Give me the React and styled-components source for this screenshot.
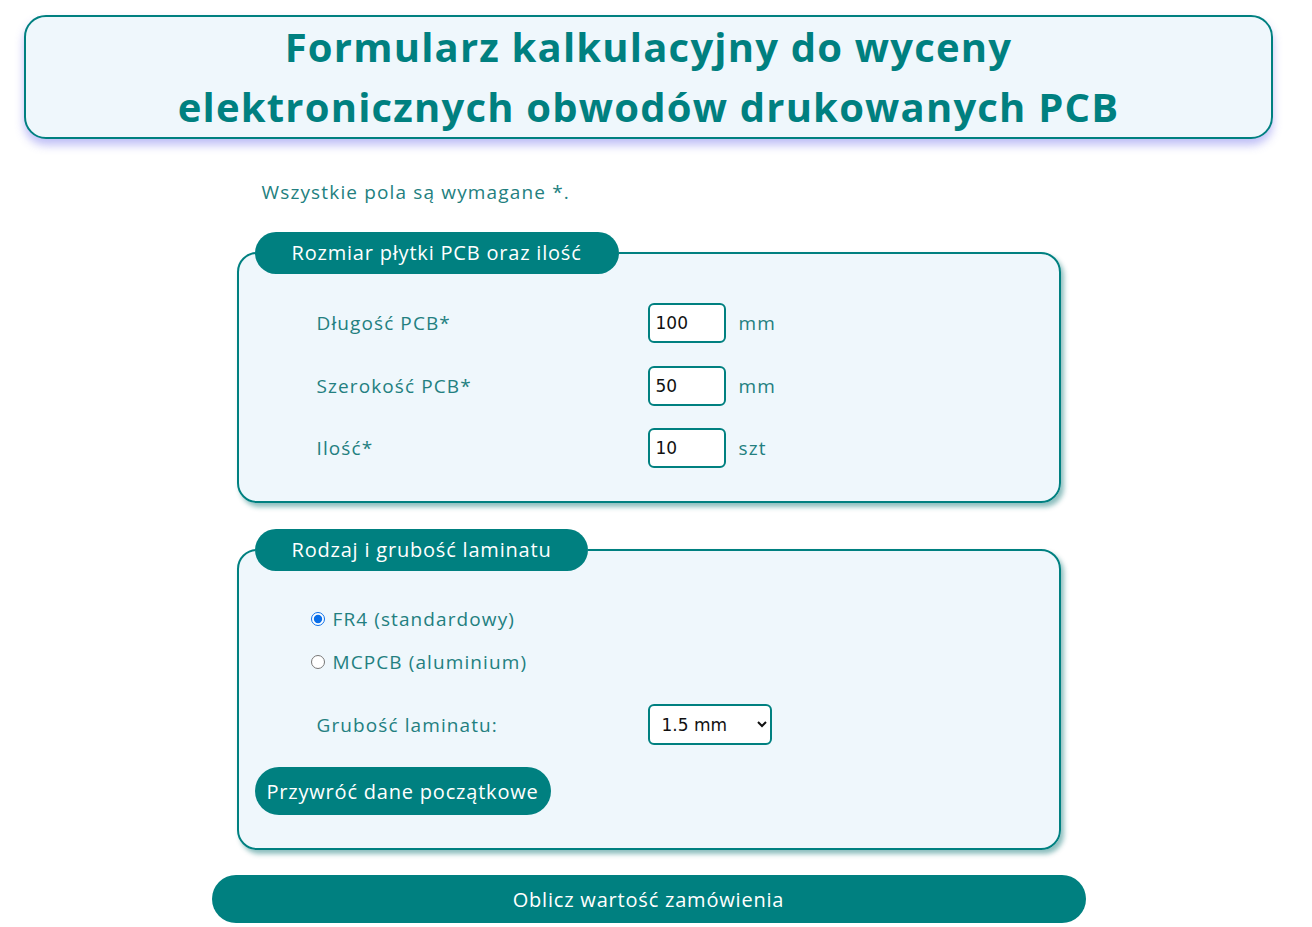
import React, { useState } from 'react';
import styled, { createGlobalStyle } from 'styled-components';

const GlobalStyle = createGlobalStyle`
    body {
        margin: 0;
        background: #fff;
        font-family: "Open Sans", "Noto Sans", sans-serif;
        color: #237f80;
    }
    * { box-sizing: border-box; }
`;

const teal = '#008080';

const Page = styled.div`
    width: 1297px;
    padding: 15px 24px 0;
`;

const Header = styled.header`
    height: 124px;
    border: 2px solid ${teal};
    border-radius: 22px;
    background: #eff7fc;
    box-shadow: 0 6px 10px rgba(110, 110, 235, 0.45);
    display: flex;
    align-items: center;
    justify-content: center;
`;

const Title = styled.h1`
    margin: 0;
    font-size: 40px;
    line-height: 60px;
    font-weight: 700;
    letter-spacing: 1.2px;
    color: ${teal};
    text-align: center;
`;

const Form = styled.form`
    width: 874px;
    margin: 0 auto;
    padding-top: 41px;
    display: flex;
    flex-direction: column;
    align-items: center;
`;

const Note = styled.p`
    align-self: flex-start;
    margin: 0 0 28px 50px;
    font-size: 19px;
    line-height: 24px;
    letter-spacing: 1.15px;
`;

const Fieldset = styled.fieldset`
    width: 824px;
    margin: 0 0 ${p => p.$after}px;
    padding: 6px 16px 33px;
    border: 2px solid ${teal};
    border-radius: 20px;
    background: #eff7fc;
    box-shadow: 3px 4px 5px rgba(0, 110, 110, 0.45);
`;

const Legend = styled.legend`
    padding: 0 37px;
    height: 42px;
    line-height: 42px;
    border-radius: 21px;
    background: ${teal};
    color: #fff;
    font-size: 20px;
    letter-spacing: 0.8px;
`;

const Row = styled.div`
    display: grid;
    grid-template-columns: 318px 78px auto;
    column-gap: 13px;
    align-items: center;
    padding-left: 62px;
    margin-top: ${p => p.$gap}px;
`;

const Label = styled.label`
    font-size: 19px;
    letter-spacing: 1.1px;
`;

const NumberInput = styled.input`
    width: 78px;
    height: 40px;
    padding: 0 6px;
    border: 2px solid ${teal};
    border-radius: 6px;
    background: #fff;
    font-family: "DejaVu Sans", sans-serif;
    font-size: 17px;
    color: #111;
    outline: none;
`;

const Unit = styled.span`
    font-size: 19px;
    letter-spacing: 1.1px;
`;

const RadioRow = styled.label`
    display: flex;
    align-items: center;
    gap: 8px;
    padding-left: 56px;
    margin-top: ${p => p.$gap}px;
    font-size: 19px;
    line-height: 24px;
    letter-spacing: 1.1px;

    input {
        margin: 0;
        width: 14px;
        height: 14px;
        accent-color: #0a6ee8;
    }
`;

const Select = styled.select`
    width: 124px;
    height: 41px;
    padding: 0 8px;
    border: 2px solid ${teal};
    border-radius: 6px;
    background: #fff;
    font-family: "DejaVu Sans", sans-serif;
    font-size: 17px;
    color: #111;
    outline: none;
`;

const PillButton = styled.button`
    height: 48px;
    padding: 0 12px;
    border: none;
    border-radius: 24px;
    background: ${teal};
    color: #fff;
    font-family: inherit;
    font-size: 20px;
    letter-spacing: 0.8px;
    cursor: pointer;
    width: ${p => (p.$wide ? '100%' : 'auto')};
    margin-top: ${p => p.$gap || 0}px;
`;

export default function App() {
    const [length, setLength] = useState('100');
    const [width, setWidth] = useState('50');
    const [qty, setQty] = useState('10');
    const [laminate, setLaminate] = useState('fr4');
    const [thickness, setThickness] = useState('1.5');

    const reset = (e) => {
        e.preventDefault();
        setLength('100');
        setWidth('50');
        setQty('10');
        setLaminate('fr4');
        setThickness('1.5');
    };

    return (
        <Page>
            <GlobalStyle />
            <Header>
                <Title>
                    Formularz kalkulacyjny do wyceny
                    <br />
                    elektronicznych obwodów drukowanych PCB
                </Title>
            </Header>

            <Form onSubmit={(e) => e.preventDefault()}>
                <Note>Wszystkie pola są wymagane *.</Note>

                <Fieldset $after={26}>
                    <Legend>Rozmiar płytki PCB oraz ilość</Legend>
                    <Row $gap={23}>
                        <Label>Długość PCB*</Label>
                        <NumberInput value={length} onChange={(e) => setLength(e.target.value)} />
                        <Unit>mm</Unit>
                    </Row>
                    <Row $gap={23}>
                        <Label>Szerokość PCB*</Label>
                        <NumberInput value={width} onChange={(e) => setWidth(e.target.value)} />
                        <Unit>mm</Unit>
                    </Row>
                    <Row $gap={22}>
                        <Label>Ilość*</Label>
                        <NumberInput value={qty} onChange={(e) => setQty(e.target.value)} />
                        <Unit>szt</Unit>
                    </Row>
                </Fieldset>

                <Fieldset $after={25}>
                    <Legend>Rodzaj i grubość laminatu</Legend>
                    <RadioRow $gap={30}>
                        <input type="radio" name="lam" checked={laminate === 'fr4'} onChange={() => setLaminate('fr4')} />
                        FR4 (standardowy)
                    </RadioRow>
                    <RadioRow $gap={19}>
                        <input type="radio" name="lam" checked={laminate === 'mc'} onChange={() => setLaminate('mc')} />
                        MCPCB (aluminium)
                    </RadioRow>
                    <Row $gap={30}>
                        <Label>Grubość laminatu:</Label>
                        <Select value={thickness} onChange={(e) => setThickness(e.target.value)}>
                            <option value="1.0">1.0 mm</option>
                            <option value="1.5">1.5 mm</option>
                            <option value="2.0">2.0 mm</option>
                        </Select>
                    </Row>
                    <PillButton type="button" $gap={22} onClick={reset}>Przywróć dane początkowe</PillButton>
                </Fieldset>

                <PillButton type="submit" $wide>Oblicz wartość zamówienia</PillButton>
            </Form>
        </Page>
    );
}
